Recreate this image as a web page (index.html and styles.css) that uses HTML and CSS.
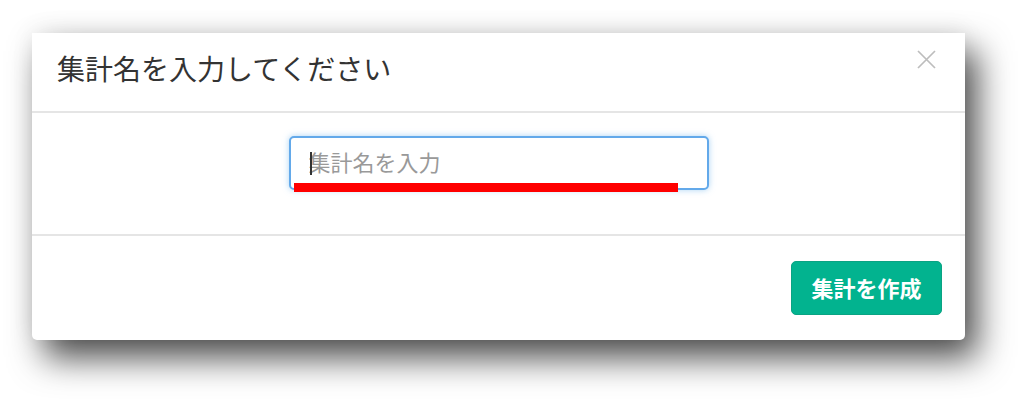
FILE: index.html
```html
<!DOCTYPE html>
<html lang="ja">
<head>
    <meta charset="UTF-8">
    <title>集計名を入力してください</title>
    <link rel="stylesheet" href="styles.css">
</head>
<body>
<div class="modal">
    <div class="modal-header">
        <h4 class="modal-title">集計名を入力してください</h4>
        <button class="close" type="button" aria-label="閉じる">
            <svg width="19" height="19" viewBox="0 0 19 19">
                <path d="M1 1L18 18M18 1L1 18" stroke="#bdbdbd" stroke-width="1.7" fill="none"/>
            </svg>
        </button>
    </div>
    <div class="modal-body">
        <div class="field">
            <input class="form-control" type="text" placeholder="集計名を入力">
            <span class="caret"></span>
            <span class="mark"></span>
        </div>
    </div>
    <div class="modal-footer">
        <button class="btn-create" type="button">集計を作成</button>
    </div>
</div>
</body>
</html>
```

FILE: styles.css
```css
html,body{margin: 0;padding: 0;background: #fff;}
body{
    min-height: 405px;
    padding-top: 33px;
    box-sizing: border-box;
    font-family: "Noto Sans CJK JP", "Noto Sans", sans-serif;
}
.modal{
    margin-left: 32px;
    width: 933px;
    height: 307px;
    background: #fff;
    border-radius: 0 0 5px 5px;
    box-shadow: 12px 18px 34px rgba(0,0,0,.7), 0 -4px 24px rgba(0,0,0,.06);
    display: flex;
    flex-direction: column;
}
.modal-header{
    height: 78px;
    display: flex;
    align-items: center;
    justify-content: space-between;
    padding: 0 29px 0 25px;
    border-bottom: 2px solid #e5e5e5;
}
.modal-title{
    margin: 0 0 8px;
    font-size: 28px;
    font-weight: normal;
    color: #333;
}
.close{
    border: 0;
    background: none;
    padding: 0;
    margin-bottom: 26px;
    width: 19px;
    height: 19px;
}
.modal-body{
    height: 123px;
    display: flex;
    justify-content: center;
    padding-top: 23px;
    box-sizing: border-box;
    border-bottom: 2px solid #e5e5e5;
}
.field{
    position: relative;
    width: 420px;
    height: 54px;
}
.form-control{
    width: 100%;
    height: 100%;
    box-sizing: border-box;
    border: 2px solid #63a9ea;
    border-radius: 5px;
    padding: 0 18px 4px;
    font-family: inherit;
    font-size: 22px;
    color: #333;
    outline: none;
    box-shadow: 0 0 6px rgba(102,175,233,.55);
}
.form-control::placeholder{color: #999;}
.caret{
    position: absolute;
    left: 21px;
    top: 16px;
    width: 2px;
    height: 23px;
    background: #333;
}
.mark{
    position: absolute;
    left: 5px;
    top: 47px;
    width: 384px;
    height: 9px;
    background: #f00;
}
.modal-footer{
    flex: 1;
    display: flex;
    justify-content: flex-end;
    align-items: flex-start;
    padding: 25px 23px 0 0;
}
.btn-create{
    width: 151px;
    height: 54px;
    border: 1px solid #0aa383;
    border-radius: 5px;
    background: #02b38f;
    color: #fff;
    font-family: inherit;
    font-size: 22px;
    font-weight: bold;
    padding: 0 0 3px;
}
```
